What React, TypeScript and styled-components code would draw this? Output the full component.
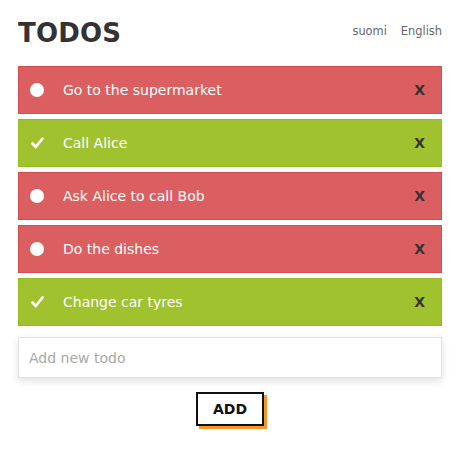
import React from "react";
import styled, { createGlobalStyle } from "styled-components";

const Global = createGlobalStyle`
  html, body { margin: 0; padding: 0; background: #fff; }
  body { font-family: "DejaVu Sans", "Open Sans", sans-serif; }
  * { box-sizing: border-box; }
`;

const Page = styled.div`
  padding: 0 18px 24px;
  width: 460px;
`;

const Header = styled.header`
  display: flex;
  align-items: center;
  justify-content: space-between;
  height: 66px;
`;

const Title = styled.h1`
  margin: 0;
  font-size: 26px;
  font-weight: 700;
  color: #333;
  letter-spacing: 0.2px;
`;

const Langs = styled.nav`
  display: flex;
  gap: 14px;
  margin-bottom: 5px;
`;

const Lang = styled.span`
  font-size: 11.4px;
  color: #666;
`;

const List = styled.ul`
  list-style: none;
  margin: 0;
  padding: 0;
  display: flex;
  flex-direction: column;
  gap: 5px;
`;

const Item = styled.li<{ $done: boolean }>`
  display: flex;
  align-items: center;
  height: 48px;
  background: ${(p) => (p.$done ? "#a0c22f" : "#db5f61")};
  border: 1px solid ${(p) => (p.$done ? "#96bb22" : "#d44d50")};
  color: #fff;
  padding: 0 16px 0 11px;
`;

const Mark = styled.span`
  width: 14px;
  height: 14px;
  display: flex;
  align-items: center;
  justify-content: center;
  margin-right: 19px;
`;

const Dot = styled.span`
  width: 14px;
  height: 14px;
  border-radius: 50%;
  background: #fff;
`;

const Label = styled.span`
  flex: 1;
  font-size: 14px;
`;

const Remove = styled.span`
  font-size: 14px;
  font-weight: 700;
  color: #333;
`;

const Input = styled.input`
  display: block;
  width: 100%;
  height: 41px;
  margin-top: 11px;
  border: 1px solid #e2e2e2;
  padding: 0 10px;
  font-family: inherit;
  font-size: 14px;
  box-shadow: 0 3px 8px rgba(0, 0, 0, 0.12);
  outline: none;
  &::placeholder { color: #a8a8a8; }
`;

const Actions = styled.div`
  display: flex;
  justify-content: center;
  margin-top: 14px;
`;

const AddButton = styled.button`
  width: 68px;
  height: 34px;
  background: #fff;
  border: 2px solid #111;
  box-shadow: 3px 3px 0 0 #f7962d;
  font-family: inherit;
  font-weight: 700;
  font-size: 14px;
  color: #111;
  padding: 0;
`;

const Check = () => (
  <svg width="13" height="12" viewBox="0 0 13 12">
    <path d="M1.5 6.5 L4.8 10 L11.5 1.5" fill="none" stroke="#fff" strokeWidth="2.6" strokeLinecap="round" strokeLinejoin="round" />
  </svg>
);

const todos = [
  { text: "Go to the supermarket", done: false },
  { text: "Call Alice", done: true },
  { text: "Ask Alice to call Bob", done: false },
  { text: "Do the dishes", done: false },
  { text: "Change car tyres", done: true },
];

export default function App() {
  return (
    <Page>
      <Global />
      <Header>
        <Title>TODOS</Title>
        <Langs>
          <Lang>suomi</Lang>
          <Lang>English</Lang>
        </Langs>
      </Header>
      <List>
        {todos.map((t) => (
          <Item key={t.text} $done={t.done}>
            <Mark>{t.done ? <Check /> : <Dot />}</Mark>
            <Label>{t.text}</Label>
            <Remove>X</Remove>
          </Item>
        ))}
      </List>
      <Input placeholder="Add new todo" />
      <Actions>
        <AddButton>ADD</AddButton>
      </Actions>
    </Page>
  );
}
